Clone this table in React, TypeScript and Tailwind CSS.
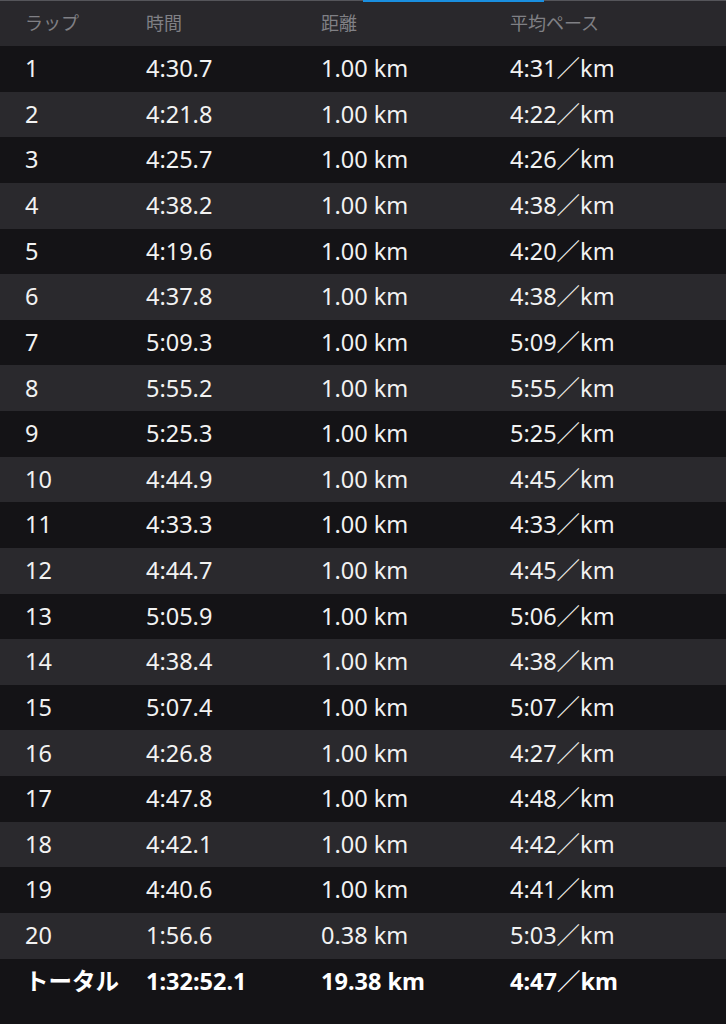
const LAPS = [
  ["1", "4:30.7", "1.00 km", "4:31／km"],
  ["2", "4:21.8", "1.00 km", "4:22／km"],
  ["3", "4:25.7", "1.00 km", "4:26／km"],
  ["4", "4:38.2", "1.00 km", "4:38／km"],
  ["5", "4:19.6", "1.00 km", "4:20／km"],
  ["6", "4:37.8", "1.00 km", "4:38／km"],
  ["7", "5:09.3", "1.00 km", "5:09／km"],
  ["8", "5:55.2", "1.00 km", "5:55／km"],
  ["9", "5:25.3", "1.00 km", "5:25／km"],
  ["10", "4:44.9", "1.00 km", "4:45／km"],
  ["11", "4:33.3", "1.00 km", "4:33／km"],
  ["12", "4:44.7", "1.00 km", "4:45／km"],
  ["13", "5:05.9", "1.00 km", "5:06／km"],
  ["14", "4:38.4", "1.00 km", "4:38／km"],
  ["15", "5:07.4", "1.00 km", "5:07／km"],
  ["16", "4:26.8", "1.00 km", "4:27／km"],
  ["17", "4:47.8", "1.00 km", "4:48／km"],
  ["18", "4:42.1", "1.00 km", "4:42／km"],
  ["19", "4:40.6", "1.00 km", "4:41／km"],
  ["20", "1:56.6", "0.38 km", "5:03／km"],
]

const FONT = "font-['Noto_Sans','Noto_Sans_CJK_JP',sans-serif]"

function Cells({ cols, className }: { cols: string[]; className: string }) {
  return (
    <>
      <div className={"w-[146px] pl-[25px] " + className}>{cols[0]}</div>
      <div className={"w-[175px] " + className}>{cols[1]}</div>
      <div className={"w-[189px] " + className}>{cols[2]}</div>
      <div className={"flex-1 " + className}>{cols[3]}</div>
    </>
  )
}

export default function App() {
  return (
    <div className={"relative h-[1024px] w-[726px] overflow-hidden bg-[#141316] " + FONT}>
      {/* tab indicator */}
      <div className="absolute top-0 left-0 right-0 h-px bg-[#55555a]" />
      <div className="absolute top-0 left-[363px] h-[2px] w-[181px] bg-[#1a8fe0]" />

      <div className="flex h-[46px] items-center bg-[#29282c]">
        <Cells cols={["ラップ", "時間", "距離", "平均ペース"]} className="text-[18px] text-[#808085]" />
      </div>

      {LAPS.map((lap, i) => (
        <div
          key={lap[0]}
          className={"flex h-[45.63px] items-center " + (i % 2 === 0 ? "bg-[#141316]" : "bg-[#2a292d]")}
        >
          <Cells cols={lap} className="text-[23.5px] text-[#f2f2f2]" />
        </div>
      ))}

      <div className="flex h-[45.63px] items-center bg-[#141316]">
        <Cells cols={["トータル", "1:32:52.1", "19.38 km", "4:47／km"]} className="text-[23.5px] font-bold text-white" />
      </div>
    </div>
  )
}
